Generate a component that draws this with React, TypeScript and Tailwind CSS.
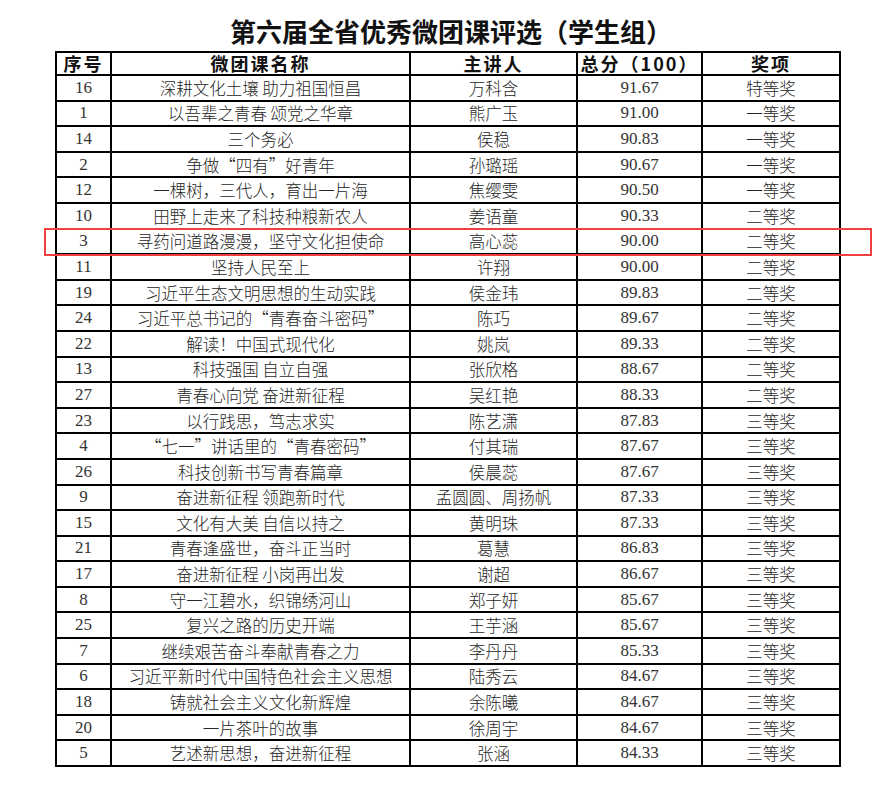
const rows: [string, string, string, string, string][] = [
  ['16', '深耕文化土壤 助力祖国恒昌', '万科含', '91.67', '特等奖'],
  ['1', '以吾辈之青春 颂党之华章', '熊广玉', '91.00', '一等奖'],
  ['14', '三个务必', '侯稳', '90.83', '一等奖'],
  ['2', '争做“四有”好青年', '孙璐瑶', '90.67', '一等奖'],
  ['12', '一棵树，三代人，育出一片海', '焦缨雯', '90.50', '一等奖'],
  ['10', '田野上走来了科技种粮新农人', '姜语童', '90.33', '二等奖'],
  ['3', '寻药问道路漫漫，坚守文化担使命', '高心蕊', '90.00', '二等奖'],
  ['11', '坚持人民至上', '许翔', '90.00', '二等奖'],
  ['19', '习近平生态文明思想的生动实践', '侯金玮', '89.83', '二等奖'],
  ['24', '习近平总书记的“青春奋斗密码”', '陈巧', '89.67', '二等奖'],
  ['22', '解读！中国式现代化', '姚岚', '89.33', '二等奖'],
  ['13', '科技强国 自立自强', '张欣格', '88.67', '二等奖'],
  ['27', '青春心向党 奋进新征程', '吴红艳', '88.33', '二等奖'],
  ['23', '以行践思，笃志求实', '陈艺潇', '87.83', '三等奖'],
  ['4', '“七一”讲话里的“青春密码”', '付其瑞', '87.67', '三等奖'],
  ['26', '科技创新书写青春篇章', '侯晨蕊', '87.67', '三等奖'],
  ['9', '奋进新征程 领跑新时代', '孟圆圆、周扬帆', '87.33', '三等奖'],
  ['15', '文化有大美 自信以持之', '黄明珠', '87.33', '三等奖'],
  ['21', '青春逢盛世，奋斗正当时', '葛慧', '86.83', '三等奖'],
  ['17', '奋进新征程 小岗再出发', '谢超', '86.67', '三等奖'],
  ['8', '守一江碧水，织锦绣河山', '郑子妍', '85.67', '三等奖'],
  ['25', '复兴之路的历史开端', '王芋涵', '85.67', '三等奖'],
  ['7', '继续艰苦奋斗奉献青春之力', '李丹丹', '85.33', '三等奖'],
  ['6', '习近平新时代中国特色社会主义思想', '陆秀云', '84.67', '三等奖'],
  ['18', '铸就社会主义文化新辉煌', '余陈曦', '84.67', '三等奖'],
  ['20', '一片茶叶的故事', '徐周宇', '84.67', '三等奖'],
  ['5', '艺述新思想，奋进新征程', '张涵', '84.33', '三等奖'],
];

const cjk = "font-['Noto_Sans_CJK_SC','Liberation_Serif',sans-serif]";
const num = "font-['Liberation_Serif','Noto_Sans_CJK_SC',serif]";

export default function App() {
  return (
    <div className="w-[892px] h-[785px] bg-white overflow-hidden">
      <h1
        className={`${cjk} h-[51px] pt-[15px] pl-[10px] text-center text-[26px] leading-[32px] font-bold text-[#111]`}
      >
        第六届全省优秀微团课评选（学生组）
      </h1>
      <div className="relative ml-[55px] w-[784px]">
        <table className="w-full table-fixed border-collapse border-2 border-black">
          <colgroup>
            <col className="w-[55px]" />
            <col className="w-[299px]" />
            <col className="w-[167px]" />
            <col className="w-[125px]" />
            <col className="w-[138px]" />
          </colgroup>
          <thead>
            <tr className="h-[23px]">
              {['序号', '微团课名称', '主讲人', '总分（100）', '奖项'].map((h) => (
                <th
                  key={h}
                  className={`${cjk} border-2 border-black p-0 text-center text-[18px] leading-[19px] font-bold tracking-[2px] text-[#111]`}
                >
                  {h}
                </th>
              ))}
            </tr>
          </thead>
          <tbody>
            {rows.map((r) => (
              <tr key={r[0]} className="h-[25.6px]">
                <td className={`${num} border-2 border-black p-0 text-center text-[17px] leading-[20px] text-[#333]`}>{r[0]}</td>
                <td className={`${cjk} border-2 border-black p-0 text-center text-[16.5px] leading-[20px] font-light text-[#262626]`}>{r[1]}</td>
                <td className={`${cjk} border-2 border-black p-0 text-center text-[16.5px] leading-[20px] font-light text-[#262626]`}>{r[2]}</td>
                <td className={`${num} border-2 border-black p-0 text-center text-[17px] leading-[20px] text-[#333]`}>{r[3]}</td>
                <td className={`${cjk} border-2 border-black p-0 text-center text-[16.5px] leading-[20px] font-light text-[#262626]`}>{r[4]}</td>
              </tr>
            ))}
          </tbody>
        </table>
        {/* highlight around row 3 */}
        <div className="absolute left-[-11px] top-[177px] h-[28px] w-[828px] border-2 border-[#f04040]" />
      </div>
    </div>
  );
}
